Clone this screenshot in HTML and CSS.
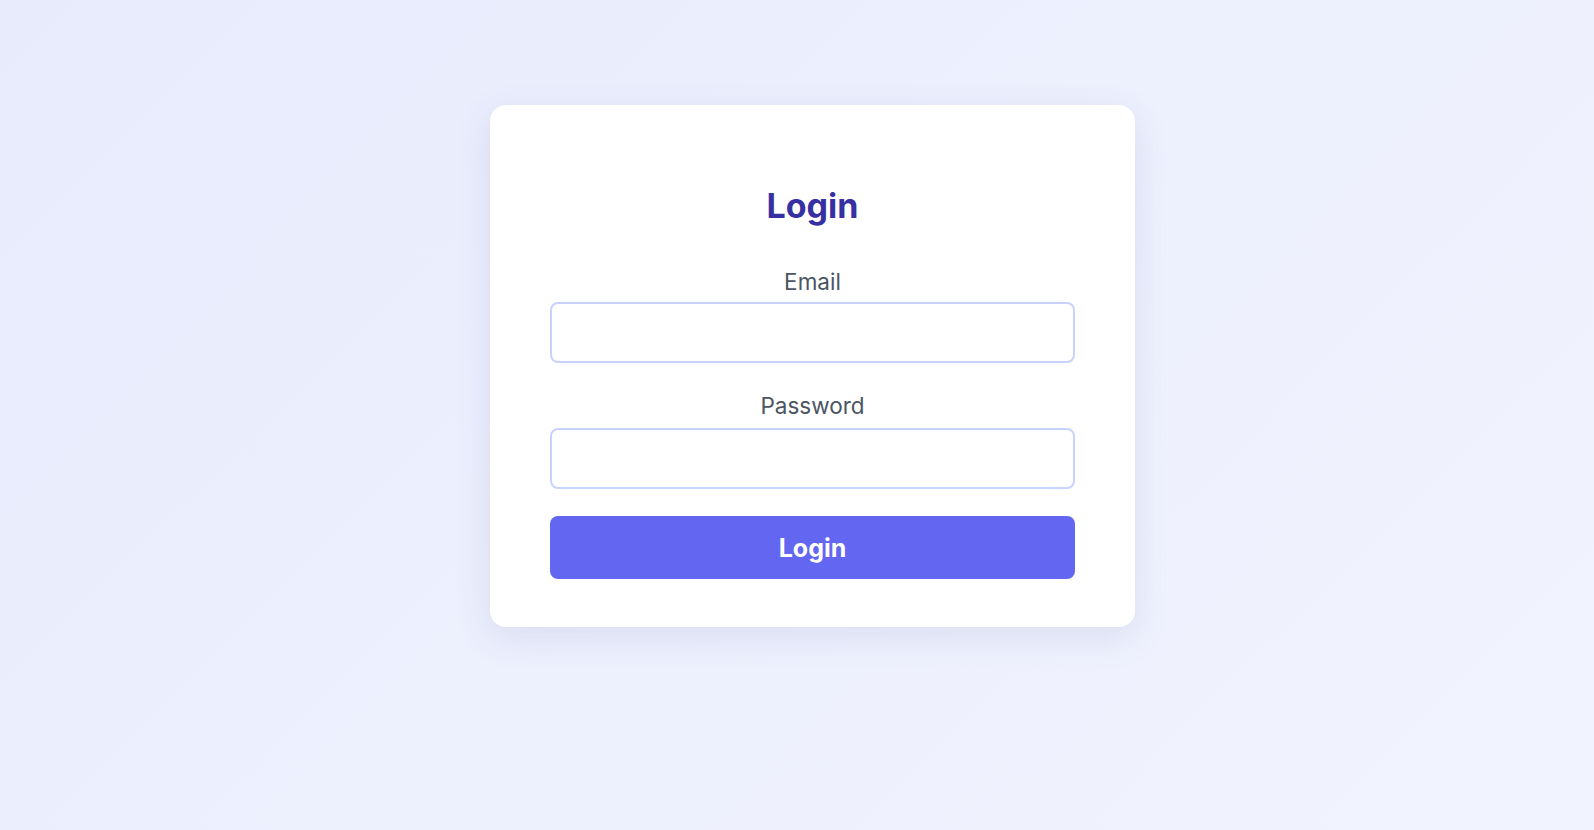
FILE: index.html
```html
<!DOCTYPE html>
<html lang="en">
<head>
<meta charset="utf-8">
<title>Login</title>
<link rel="stylesheet" href="styles.css">
</head>
<body>
<main class="page">
  <form class="card">
    <h1 class="title">Login</h1>
    <div class="field">
      <label class="label" for="email">Email</label>
      <input class="input" id="email" type="email">
    </div>
    <div class="field field-last">
      <label class="label" for="password">Password</label>
      <input class="input" id="password" type="password">
    </div>
    <button class="button" type="button">Login</button>
  </form>
</main>
</body>
</html>
```

FILE: styles.css
```css
* { box-sizing: border-box; }
html, body {
  margin: 0;
  height: 100%;
}
body {
  font-family: Inter, "Noto Sans", sans-serif;
  background: linear-gradient(135deg, #e7ebfc 0%, #edf0fd 50%, #f1f3fe 100%);
}
.page {
  min-height: 100%;
  display: flex;
  justify-content: center;
  align-items: flex-start;
  padding: 105px 0 0 31px;
}
.card {
  width: 645px;
  background: #ffffff;
  border-radius: 16px;
  padding: 60px 60px 48px;
  box-shadow: 0 10px 36px rgba(70, 80, 150, 0.12);
  display: flex;
  flex-direction: column;
}
.title {
  margin: 21px 0 42px;
  font-size: 34px;
  line-height: 40px;
  font-weight: 700;
  color: #3730a3;
  text-align: center;
}
.field {
  display: flex;
  flex-direction: column;
  gap: 6px;
  margin-bottom: 29px;
}
.field-last {
  gap: 8px;
  margin-bottom: 27px;
}
.label {
  font-size: 22.5px;
  line-height: 28px;
  color: #4b5563;
  text-align: center;
}
.input {
  width: 100%;
  height: 61px;
  border: 2px solid #c7d2fe;
  border-radius: 8px;
  background: #fff;
  font: inherit;
  outline: none;
}
.button {
  height: 63px;
  border: none;
  border-radius: 8px;
  background: #6366f1;
  color: #fff;
  font-family: Inter, "Noto Sans", sans-serif;
  font-size: 25px;
  font-weight: 700;
  cursor: pointer;
}
```
